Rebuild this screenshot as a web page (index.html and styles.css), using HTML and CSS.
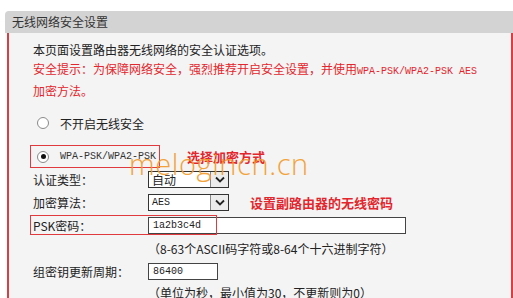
FILE: index.html
```html
<!DOCTYPE html>
<html>
	<head>
		<meta charset="utf-8">
		<title>无线网络安全设置</title>
		<link rel="stylesheet" href="styles.css">
	</head>
	<body>
		<!--panel-->
		<div class="panel">
			<div class="panel-title">无线网络安全设置</div>
			<div class="panel-body">
				<p class="intro">
					本页面设置路由器无线网络的安全认证选项。<br>
					<span class="warn">安全提示：为保障网络安全，强烈推荐开启安全设置，并使用<span class="mono">WPA-PSK/WPA2-PSK AES</span><br>加密方法。</span>
				</p>
				<div class="radio-row first">
					<span class="radio"></span>
					<span>不开启无线安全</span>
				</div>
				<div class="radio-line">
					<div class="radio-row boxed">
						<span class="radio checked"></span>
						<span class="mono dark">WPA-PSK/WPA2-PSK</span>
					</div>
					<span class="note">选择加密方式</span>
				</div>
				<!--form rows-->
				<div class="form-row">
					<span>认证类型：</span>
					<div class="select">
						<span class="select-text">自动</span>
						<span class="select-btn"><svg width="10" height="7" viewBox="0 0 10 7"><path d="M1 1.5 L5 5.5 L9 1.5" fill="none" stroke="#222" stroke-width="1.8"/></svg></span>
					</div>
				</div>
				<div class="form-row">
					<span>加密算法：</span>
					<div class="control-line">
						<div class="select">
							<span class="select-text mono">AES</span>
							<span class="select-btn"><svg width="10" height="7" viewBox="0 0 10 7"><path d="M1 1.5 L5 5.5 L9 1.5" fill="none" stroke="#222" stroke-width="1.8"/></svg></span>
						</div>
						<span class="note wide">设置副路由器的无线密码</span>
					</div>
				</div>
				<div class="form-row marked">
					<span>PSK密码：</span>
					<div class="input long mono">1a2b3c4d</div>
				</div>
				<div class="form-row">
					<span></span>
					<span class="hint">（8-63个ASCII码字符或8-64个十六进制字符）</span>
				</div>
				<div class="form-row">
					<span>组密钥更新周期：</span>
					<div class="input short mono">86400</div>
				</div>
				<div class="form-row last">
					<span></span>
					<span class="hint">（单位为秒，最小值为30，不更新则为0）</span>
				</div>
				<!--/form rows-->
			</div>
		</div>
		<!--/panel-->
		<div class="watermark">melogincn.cn</div>
	</body>
</html>
```
FILE: styles.css
```css
body{
	margin:0;
	background:#fff;
	font-family:"Noto Sans CJK SC", sans-serif;
	font-size:12px;
	color:#222;
	overflow:hidden;
}
.panel{
	margin:11px 0 0 5px;
}
.panel-title{
	height:22px;
	line-height:22px;
	padding-left:7px;
	background:#d3d3d3;
	color:#333;
	border-top-left-radius:4px;
}
.panel-body{
	box-sizing:border-box;
	min-height:265px;
	margin:0 0 0 2px;
	padding:7px 0 0 24px;
	background:#f4f4f4;
	border-left:2px solid #dd3c40;
	border-right:2px solid #dd3c40;
}
.intro{
	margin:0;
	line-height:19px;
}
.warn{
	color:#e3262d;
}
.mono{
	font-family:"Liberation Mono", monospace;
	font-size:10px;
}
.dark{
	color:#333;
}
.radio-row{
	display:flex;
	align-items:center;
	height:22px;
}
.radio-row.first{
	margin-top:12px;
	padding-left:4px;
}
.radio-line{
	display:flex;
	align-items:center;
	margin-top:11px;
}
.radio-row.boxed{
	box-sizing:border-box;
	height:23px;
	margin-left:-3px;
	padding:0 3px 0 6px;
	border:1px solid #e0393e;
}
.radio{
	box-sizing:border-box;
	width:12px;
	height:12px;
	margin-right:11px;
	border:1px solid #8a8a8a;
	border-radius:50%;
	background:#fff;
	display:flex;
	align-items:center;
	justify-content:center;
}
.radio.checked:after{
	content:"";
	width:5px;
	height:5px;
	border-radius:50%;
	background:#111;
}
.note{
	margin-left:27px;
	color:#e3262d;
	font-size:13px;
	font-weight:bold;
}
.note.wide{
	margin-left:21px;
}
.form-row{
	display:grid;
	grid-template-columns:115px 1fr;
	align-items:center;
	height:23px;
	position:relative;
}
.form-row.last{
	height:18px;
}
.form-row.marked:before{
	content:"";
	position:absolute;
	left:-3px;
	top:1px;
	width:185px;
	height:18px;
	border:1px solid #e0393e;
}
.control-line{
	display:flex;
	align-items:center;
}
.select{
	box-sizing:border-box;
	display:flex;
	width:81px;
	height:17px;
	border:1px solid #333;
	background:#fff;
}
.select-text{
	flex:1;
	padding-left:3px;
	line-height:15px;
}
.select-btn{
	width:17px;
	border-left:1px solid #888;
	background:#ececec;
	display:flex;
	align-items:center;
	justify-content:center;
}
.input{
	box-sizing:border-box;
	height:17px;
	line-height:15px;
	padding-left:4px;
	border:1px solid #444;
	background:#fff;
	color:#222;
}
.input.long{
	width:258px;
}
.input.short{
	width:70px;
}
.hint{
	color:#222;
}
.watermark{
	position:absolute;
	left:129px;
	top:144px;
	font-family:"Open Sans", sans-serif;
	font-size:29px;
	font-weight:300;
	letter-spacing:0.6px;
	color:#f39a26;
	opacity:0.9;
	pointer-events:none;
}
```
